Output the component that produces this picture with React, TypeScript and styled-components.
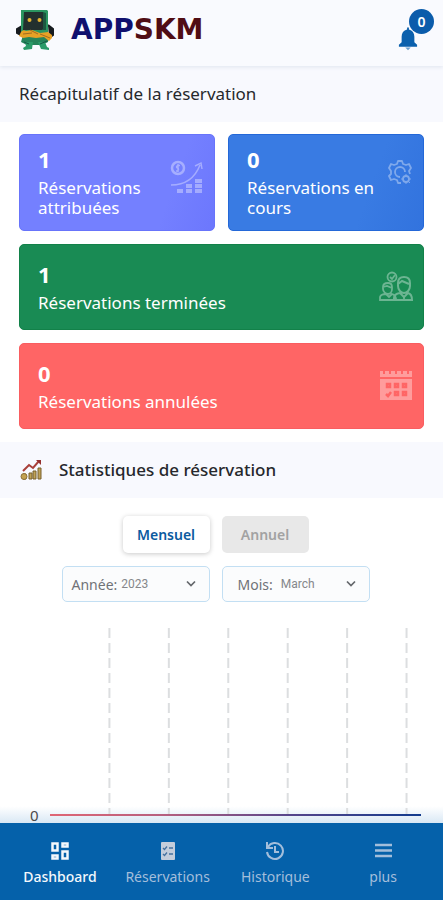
import React, { useState } from "react";
import styled, { createGlobalStyle } from "styled-components";

const GlobalStyle = createGlobalStyle`
  * { box-sizing: border-box; }
  body {
    margin: 0;
    background: #fff;
    color: #26282c;
    font-family: "Noto Sans", "Open Sans", sans-serif;
  }
  button, select { font-family: inherit; }
`;

const Page = styled.div`
  display: flex;
  flex-direction: column;
  min-height: 100vh;
`;

const Header = styled.header`
  display: flex;
  align-items: center;
  justify-content: space-between;
  height: 66px;
  padding: 0 9px 6px 16px;
  background: #f9fafe;
  box-shadow: 0 1px 4px #dfe4ee;
  z-index: 1;
`;

const Brand = styled.a`
  display: flex;
  align-items: center;
  gap: 16px;
  color: #10106e;
  text-decoration: none;
  font: bold 28px/32px "DejaVu Sans", sans-serif;
`;

const BrandAccent = styled.span`
  color: #500d14;
`;

const BellButton = styled.button`
  position: relative;
  display: flex;
  align-items: flex-end;
  width: 36px;
  height: 42px;
  padding: 0;
  border: 0;
  background: none;
`;

const Badge = styled.span`
  position: absolute;
  top: 0;
  right: 0;
  width: 25px;
  height: 25px;
  border-radius: 50%;
  background: #0b5cab;
  color: #fff;
  font-size: 14px;
  font-weight: 600;
  line-height: 25px;
  text-align: center;
`;

const SectionBar = styled.div`
  display: flex;
  align-items: center;
  gap: 17px;
  height: 56px;
  padding: 0 19px;
  background: #f8f9fe;
`;

const SectionTitle = styled.h2<{ $strong?: boolean }>`
  margin: 0;
  font-size: 17px;
  line-height: 24px;
  font-weight: ${(p) => (p.$strong ? 500 : 400)};
`;

const Cards = styled.section`
  display: grid;
  grid-template-columns: 1fr 1fr;
  gap: 13px;
  padding: 12px 19px 13px;
`;

const Card = styled.article<{ $color: string; $edge: string; $full?: boolean }>`
  display: flex;
  align-items: center;
  justify-content: space-between;
  grid-column: ${(p) => (p.$full ? "1 / -1" : "auto")};
  min-height: ${(p) => (p.$full ? 86 : 97)}px;
  padding: 0 10px 0 18px;
  border: 1px solid ${(p) => p.$edge};
  border-radius: 5px;
  background: ${(p) => p.$color};
  color: #fff;
`;

const CardBody = styled.div`
  display: flex;
  flex: 1;
  flex-direction: column;
  gap: 7px;
  min-width: 0;
`;

const CardCount = styled.strong`
  font-size: 22px;
  line-height: 24px;
  font-weight: 700;
`;

const CardLabel = styled.span`
  font-size: 17px;
  line-height: 20px;
`;

const CardIcon = styled.svg`
  flex: none;
  align-self: flex-start;
  margin-top: 24px;
  opacity: 0.36;
`;

const Stats = styled.section`
  display: flex;
  flex: 1;
  flex-direction: column;
  padding-top: 18px;
`;

const Controls = styled.div`
  display: flex;
  justify-content: center;
  gap: 12px;
  padding-right: 12px;
  margin-bottom: 13px;
`;

const Tab = styled.button<{ $active: boolean }>`
  width: 87px;
  height: 37px;
  padding: 0;
  border: 0;
  border-radius: 5px;
  background: ${(p) => (p.$active ? "#fff" : "#e8e8e8")};
  box-shadow: ${(p) => (p.$active ? "0 1px 5px #c9c9c9" : "none")};
  color: ${(p) => (p.$active ? "#0b5a9f" : "#a2a2a2")};
  font-size: 14px;
  font-weight: 600;
`;

const Picker = styled.label<{ $inset: number; $gap: number }>`
  position: relative;
  display: flex;
  align-items: center;
  gap: ${(p) => p.$gap}px;
  width: 148px;
  height: 36px;
  padding-left: ${(p) => p.$inset}px;
  border: 1px solid #c3dff3;
  border-radius: 5px;
  background: #fbfcfd;
  color: #707277;
  font-size: 14px;
`;

const Select = styled.select`
  flex: 1;
  min-width: 0;
  height: 100%;
  padding: 0 24px 0 0;
  border: 0;
  appearance: none;
  background: none;
  color: #85878b;
  font: 12px/16px Roboto, sans-serif;
`;

const Caret = styled.svg`
  position: absolute;
  right: 13px;
  pointer-events: none;
`;

const Chart = styled.div`
  display: flex;
  flex: 1;
  align-items: flex-end;
  gap: 11px;
  padding: 12px 22px 0 30px;
  background: linear-gradient(#fff 92%, #d9e8f5);
`;

const AxisValue = styled.span`
  font: 15px/16px "Noto Sans", sans-serif;
  color: #4a4a4a;
`;

const Plot = styled.svg`
  flex: 1;
  min-width: 0;
  height: 195px;
`;

const Nav = styled.nav`
  display: grid;
  grid-template-columns: repeat(4, 1fr);
  height: 77px;
  padding: 0 6px;
  background: #0561aa;
`;

const NavItem = styled.a<{ $active?: boolean }>`
  display: flex;
  flex-direction: column;
  align-items: center;
  gap: 6px;
  padding-top: 18px;
  color: ${(p) => (p.$active ? "#f4f8fc" : "#a3bedb")};
  font-size: 14px;
  font-weight: ${(p) => (p.$active ? 500 : 400)};
  line-height: 20px;
  text-decoration: none;
`;

const Mascot = () => (
  <svg width="39" height="42" viewBox="0 0 39 42" aria-hidden="true">
    <path d="M6 17L1 20v4l4 2M32 16l5 4v6l-4 3" fill="#171b1f" stroke="#171b1f" strokeWidth="2" />
    <path d="M5 1h26l1 1v21l-3 5H8l-3-4z" fill="#2a9560" />
    <path d="M8 3h19l2 16-3 2H7z" fill="#22302e" />
    <path d="M27 3l3 1v17h-3z" fill="#1d5740" />
    <circle cx="13.500" cy="11" r="2" fill="#e5b32f" />
    <circle cx="23.500" cy="11" r="2" fill="#e5b32f" />
    <path d="M7 26h26l-1 7-6 3H11l-6-3z" fill="#26845a" />
    <path d="M5 23q2-3 5-1l6-1 8 3 8-1 4 3v3l-3 3-5-4-8 1-7-1-6 1-4-2z" fill="#e7a126" />
    <path d="M14 21l8 4M7 25l9-1M24 25l10 4" stroke="#a16c20" strokeWidth="1" />
    <path d="M9 33h8l-1 7-8 1-1-2 3-2zM22 33h7l2 5 2 1v2l-8-1z" fill="#2b9b68" />
    <path d="M8 33l5 2M24 35l7-3" stroke="#175844" />
  </svg>
);

const Bell = () => (
  <svg width="20" height="25" viewBox="0 0 22 26" fill="#0b60ad" aria-hidden="true">
    <path d="M10 3V1h2v2c4 1 6 4 6 8v6l3 3v2H1v-2l3-3v-6c0-4 2-7 6-8z" />
    <path d="M8 23h6l-3 3z" opacity=".6" />
  </svg>
);

const GrowthIcon = () => (
  <CardIcon width="34" height="36" viewBox="0 0 34 36" fill="none" stroke="#fff" aria-hidden="true">
    <circle cx="8" cy="9" r="6" strokeWidth="2.500" />
    <path d="M10 6.500H7.500q-2 1.500 0 2.500t0 3H6M8 5v8" strokeWidth="1.500" />
    <path d="M1 26c14 0 24-7 29-20M25 7l6-3 1 6" strokeWidth="1.500" />
    <path d="M7 32h6M16 27h6M16 32h6M25 22h7M25 27h7M25 32h7" strokeWidth="4" />
  </CardIcon>
);

const GearIcon = () => (
  <CardIcon width="26" height="26" viewBox="0 0 26 26" fill="none" stroke="#fff" strokeWidth="1.800" strokeLinejoin="round" aria-hidden="true">
    <path d="M14 24h-3l-1-3-3-1-3 1-2-4 2-2v-3L2 9l2-4 3 1 3-1 1-3h4l1 3 3 1 3-1 2 4-2 3 1 3" />
    <path d="M18 13a5 5 0 1 0-5 5" />
    <circle cx="19" cy="20" r="3" />
    <path d="M19 15v2M14 20h2M22 20h2M19 23v2M16 17l1 1M22 23l1 1" strokeWidth="1" />
  </CardIcon>
);

const TeamIcon = () => (
  <CardIcon width="34" height="32" viewBox="0 -2 34 30" fill="none" stroke="#fff" strokeWidth="1.800" aria-hidden="true">
    <circle cx="13" cy="5" r="4.500" />
    <path d="M11 5l2 2 3-4" />
    <path d="M4 17v-2c0-3 2-4 5-4s4 2 4 4v2c0 3-2 5-4 5s-5-2-5-5zM4 15l4-1 5 2M1 28v-3q1-3 6-3l3 3 3-3q4 1 4 6z" />
    <path d="M19 14v-3c0-4 2-6 6-6s6 2 6 6v3c0 4-3 7-6 7s-6-3-6-7zM19 12l4-3 7 3M15 28v-2q0-4 6-5l4 4 4-4q4 1 4 7z" strokeWidth="2" />
    <path d="M25 24v4" />
  </CardIcon>
);

const CalendarIcon = () => (
  <CardIcon width="34" height="34" viewBox="0 0 34 34" aria-hidden="true">
    <path d="M1 3h32v6H1zM1 11h32v21H1z" fill="#fff" />
    <path d="M5 1v5M11 1v5M17 1v5M23 1v5M29 1v5" stroke="#ff6565" strokeWidth="2" />
    <path d="M8 16h3v3H8zM16 16h3v3h-3zM24 16h3v3h-3zM16 24h3v3h-3zM24 24h3v3h-3zM7 26l2 2 3-4" fill="none" stroke="#ff6565" strokeWidth="2.500" />
  </CardIcon>
);

const StatsIcon = () => (
  <svg width="23" height="22" viewBox="0 0 23 22" aria-hidden="true">
    <path d="M4 12l6-6 4 3 6-7" fill="none" stroke="#a9403a" strokeWidth="2" />
    <path d="M17 1h5v5z" fill="#95302f" />
    <path d="M4 15h3v5H4zM10 14h3v6h-3zM14 12h3v8h-3zM19 9h3v11h-3z" fill="#bfa258" stroke="#79602d" />
    <circle cx="5" cy="17.500" r="3" fill="#c4a24f" stroke="#8b7037" />
  </svg>
);

const DashboardIcon = () => (
  <svg width="20" height="20" viewBox="0 0 20 20" fill="none" stroke="currentColor" strokeWidth="2.500" aria-hidden="true">
    <path d="M2.500 2.500h5v7h-5zM12.500 2.500h5v3h-5zM2.500 14.500h5v3h-5zM12.500 10.500h5v7h-5z" />
  </svg>
);

const ListIcon = () => (
  <svg width="20" height="20" viewBox="0 0 20 20" aria-hidden="true">
    <rect x="3" y="1" width="14" height="18" rx="1" fill="#c4cddb" />
    <path d="M5 7l1.500 1.500L9 5.500M5 13l1.500 1.500L9 11.500M11 7h4M11 13h4" fill="none" stroke="#45719f" strokeWidth="1.300" />
  </svg>
);

const HistoryIcon = () => (
  <svg width="20" height="20" viewBox="0 0 20 20" fill="none" stroke="currentColor" strokeWidth="2" aria-hidden="true">
    <path d="M3 6a8 8 0 1 1-1 5M2 1v6h6M10 5v6h4" />
  </svg>
);

const MenuIcon = () => (
  <svg width="20" height="20" viewBox="0 0 20 20" stroke="currentColor" strokeWidth="2.500" aria-hidden="true">
    <path d="M2 4h17M2 9.500h17M2 15h17" />
  </svg>
);

const Chevron = () => (
  <Caret width="10" height="8" viewBox="0 0 10 8" fill="none" stroke="#64676b" strokeWidth="1.700" aria-hidden="true">
    <path d="M1 1.500l4 4 4-4" />
  </Caret>
);

const cards = [
  { count: 1, label: "Réservations attribuées", color: "linear-gradient(110deg, #7480ff 75%, #6c77fd)", edge: "#6874fa", icon: <GrowthIcon /> },
  { count: 0, label: "Réservations en cours", color: "linear-gradient(110deg, #397be3 70%, #3273de)", edge: "#2468d8", icon: <GearIcon /> },
  { count: 1, label: "Réservations terminées", color: "#198b54", edge: "#128149", full: true, icon: <TeamIcon /> },
  { count: 0, label: "Réservations annulées", color: "#ff6565", edge: "#f95d60", full: true, icon: <CalendarIcon /> },
];

const gridLines = ["16%", "32%", "48%", "64%", "80%", "96%"];

export default function App() {
  const [period, setPeriod] = useState("Mensuel");

  return (
    <Page>
      <GlobalStyle />
      <Header>
        <Brand href="#">
          <Mascot />
          <span>APP<BrandAccent>SKM</BrandAccent></span>
        </Brand>
        <BellButton type="button" aria-label="Notifications">
          <Bell />
          <Badge>0</Badge>
        </BellButton>
      </Header>

      <SectionBar>
        <SectionTitle>Récapitulatif de la réservation</SectionTitle>
      </SectionBar>
      <Cards>
        {cards.map((card) => (
          <Card key={card.label} $color={card.color} $edge={card.edge} $full={card.full}>
            <CardBody>
              <CardCount>{card.count}</CardCount>
              <CardLabel>{card.label}</CardLabel>
            </CardBody>
            {card.icon}
          </Card>
        ))}
      </Cards>

      <SectionBar>
        <StatsIcon />
        <SectionTitle $strong>Statistiques de réservation</SectionTitle>
      </SectionBar>
      <Stats>
        <Controls>
          {["Mensuel", "Annuel"].map((name) => (
            <Tab key={name} type="button" $active={period === name} onClick={() => setPeriod(name)}>
              {name}
            </Tab>
          ))}
        </Controls>
        <Controls>
          <Picker $inset={9} $gap={4}>
            Année:
            <Select defaultValue="2023">
              <option>2023</option>
            </Select>
            <Chevron />
          </Picker>
          <Picker $inset={15} $gap={8}>
            Mois:
            <Select defaultValue="March">
              <option>March</option>
            </Select>
            <Chevron />
          </Picker>
        </Controls>
        <Chart>
          <AxisValue>0</AxisValue>
          <Plot aria-hidden="true">
            <defs>
              <linearGradient id="series">
                <stop offset="0" stopColor="#df6675" />
                <stop offset=".3" stopColor="#b7607f" />
                <stop offset=".65" stopColor="#55458b" />
                <stop offset="1" stopColor="#123b8d" />
              </linearGradient>
            </defs>
            {gridLines.map((x) => (
              <line key={x} x1={x} x2={x} y1="0" y2="186" stroke="#dcdee0" strokeWidth="2" strokeDasharray="10 5" />
            ))}
            <rect y="186" width="100%" height="2" fill="url(#series)" />
          </Plot>
        </Chart>
      </Stats>

      <Nav>
        <NavItem href="#dashboard" $active><DashboardIcon />Dashboard</NavItem>
        <NavItem href="#reservations"><ListIcon />Réservations</NavItem>
        <NavItem href="#historique"><HistoryIcon />Historique</NavItem>
        <NavItem href="#plus"><MenuIcon />plus</NavItem>
      </Nav>
    </Page>
  );
}
